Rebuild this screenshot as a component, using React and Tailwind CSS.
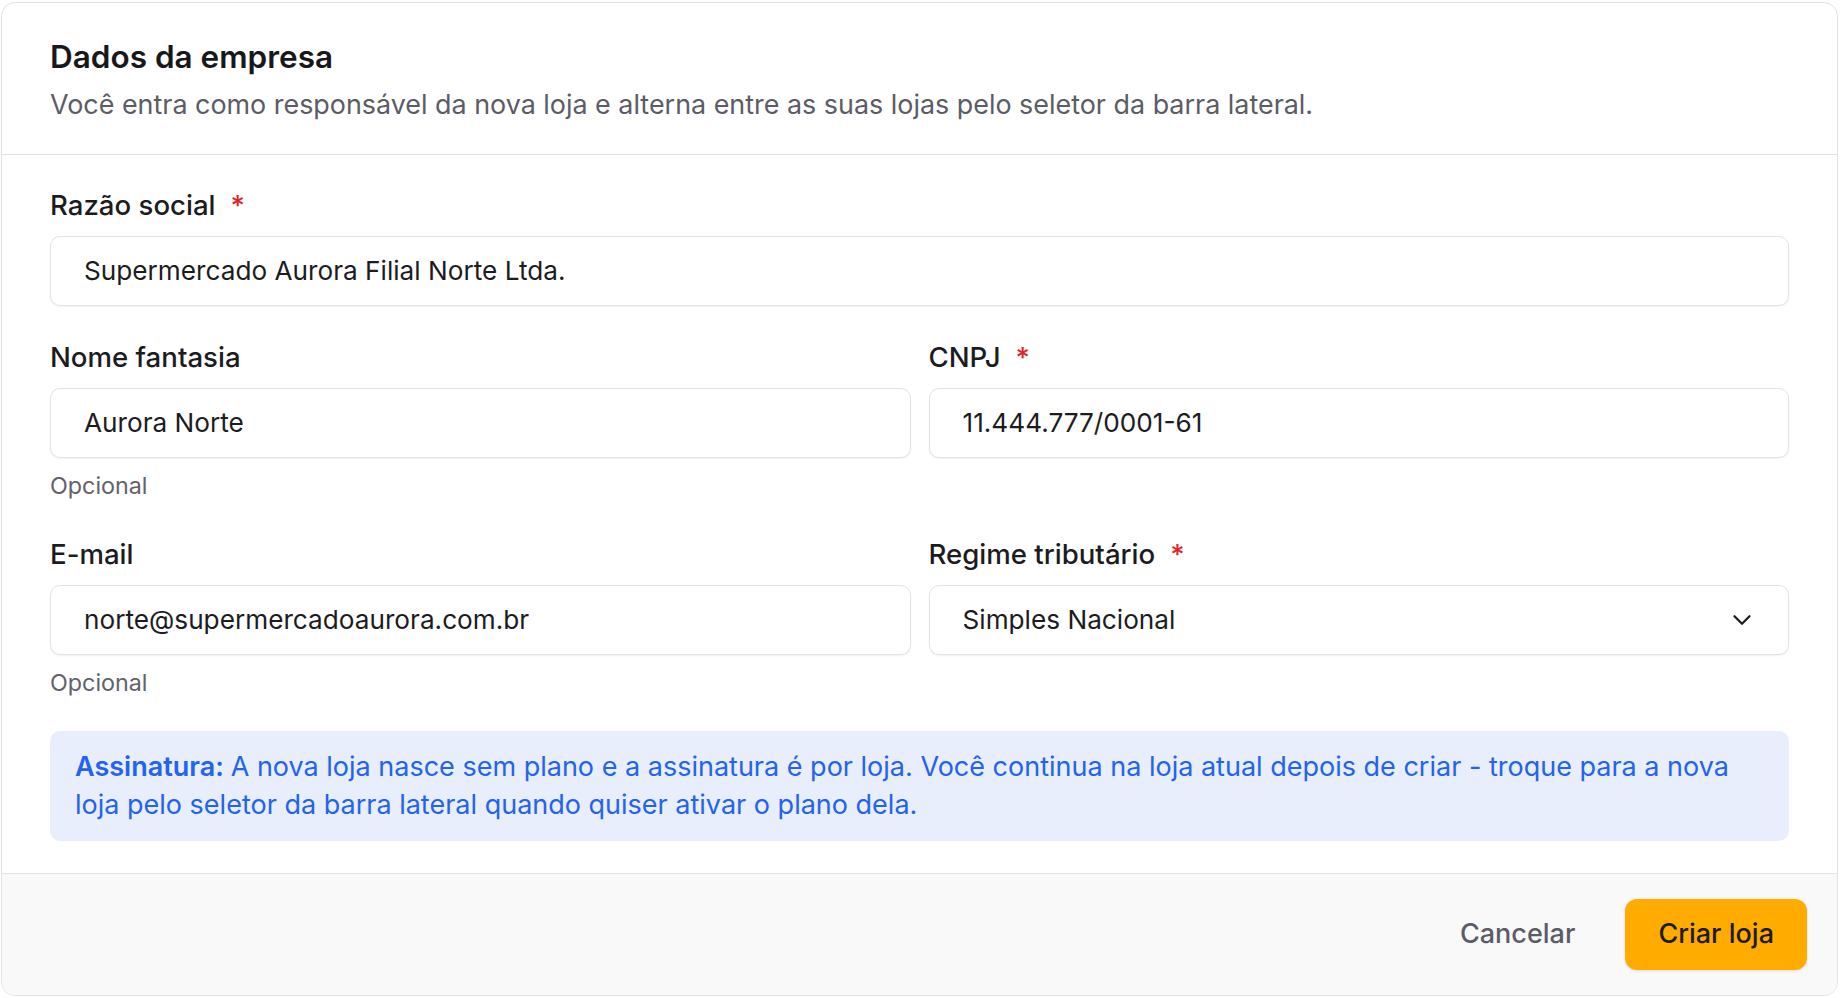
import React from "react";

function Req() {
  return <span className="ml-[15px] text-[#e0242a]">*</span>;
}

function Label({ children, required }) {
  return (
    <div className="text-[27.6px] leading-[40px] font-medium text-[#1c1c1f]">
      {children}
      {required ? <Req /> : null}
    </div>
  );
}

function Input({ value, select }) {
  return (
    <div className="h-[70px] rounded-[10px] border-[1.5px] border-[#e3e3e6] bg-white shadow-[0_1px_2px_rgba(0,0,0,0.06)] pl-[33px] pr-[31px] flex items-center justify-between">
      <span className="text-[26.2px] text-[#1c1c1f]">{value}</span>
      {select ? (
        <svg width="30" height="30" viewBox="0 0 24 24" fill="none" stroke="#1c1c1f" strokeWidth="1.8" strokeLinecap="round" strokeLinejoin="round">
          <path d="m6 9 6 6 6-6" />
        </svg>
      ) : null}
    </div>
  );
}

function Hint() {
  return <div className="text-[23.3px] leading-[34px] text-[#62626b]">Opcional</div>;
}

export default function App() {
  return (
    <div className="w-full h-[998px] bg-white pt-[2px] pl-[1px] pr-[2px] pb-[2px]" style={{ fontFamily: "Inter, 'Noto Sans', sans-serif" }}>
      <div className="h-full flex flex-col rounded-[14px] border border-[#e3e3e6] overflow-hidden bg-white">
        <div className="px-[48px] pt-[36px] pb-[30px] border-b-[1.5px] border-[#e3e3e6]">
          <h2 className="text-[31.5px] leading-[36px] font-semibold text-[#18181b]">Dados da empresa</h2>
          <p className="mt-[9px] text-[26.9px] leading-[40px] text-[#5c5c66]">
            Você entra como responsável da nova loja e alterna entre as suas lojas pelo seletor da barra lateral.
          </p>
        </div>
        <div className="flex-1 px-[48px] pt-[30px] flex flex-col gap-[31px]">
          <div className="flex flex-col gap-[11px]">
            <Label required>Razão social</Label>
            <Input value="Supermercado Aurora Filial Norte Ltda." />
          </div>
          <div className="grid grid-cols-2 gap-x-[18px]">
            <div className="flex flex-col gap-[11px]">
              <Label>Nome fantasia</Label>
              <Input value="Aurora Norte" />
              <Hint />
            </div>
            <div className="flex flex-col gap-[11px]">
              <Label required>CNPJ</Label>
              <Input value="11.444.777/0001-61" />
            </div>
          </div>
          <div className="grid grid-cols-2 gap-x-[18px]">
            <div className="flex flex-col gap-[11px]">
              <Label>E-mail</Label>
              <Input value="norte@supermercadoaurora.com.br" />
              <Hint />
            </div>
            <div className="flex flex-col gap-[11px]">
              <Label required>Regime tributário</Label>
              <Input value="Simples Nacional" select />
            </div>
          </div>
          <div className="rounded-[10px] bg-[#e8eefc] px-[25px] py-[17px] text-[27px] leading-[38px] text-[#2463eb]">
            <span className="font-semibold">Assinatura: </span>A nova loja nasce sem plano e a assinatura é por loja. Você continua na loja atual depois de criar - troque para a nova loja pelo seletor da barra lateral quando quiser ativar o plano dela.
          </div>
        </div>
        <div className="bg-[#f9f9fa] border-t-[1.5px] border-[#e3e3e6] px-[30px] py-[25px] flex items-center justify-end gap-[17px]">
          <button className="h-[71px] px-[33px] rounded-[12px] text-[27px] font-medium text-[#5c5c66]">Cancelar</button>
          <button className="h-[71px] px-[33px] rounded-[12px] bg-[#ffab00] text-[27px] font-medium text-[#1c1c1f] shadow-[0_1px_3px_rgba(0,0,0,0.12)]">Criar loja</button>
        </div>
      </div>
    </div>
  );
}
